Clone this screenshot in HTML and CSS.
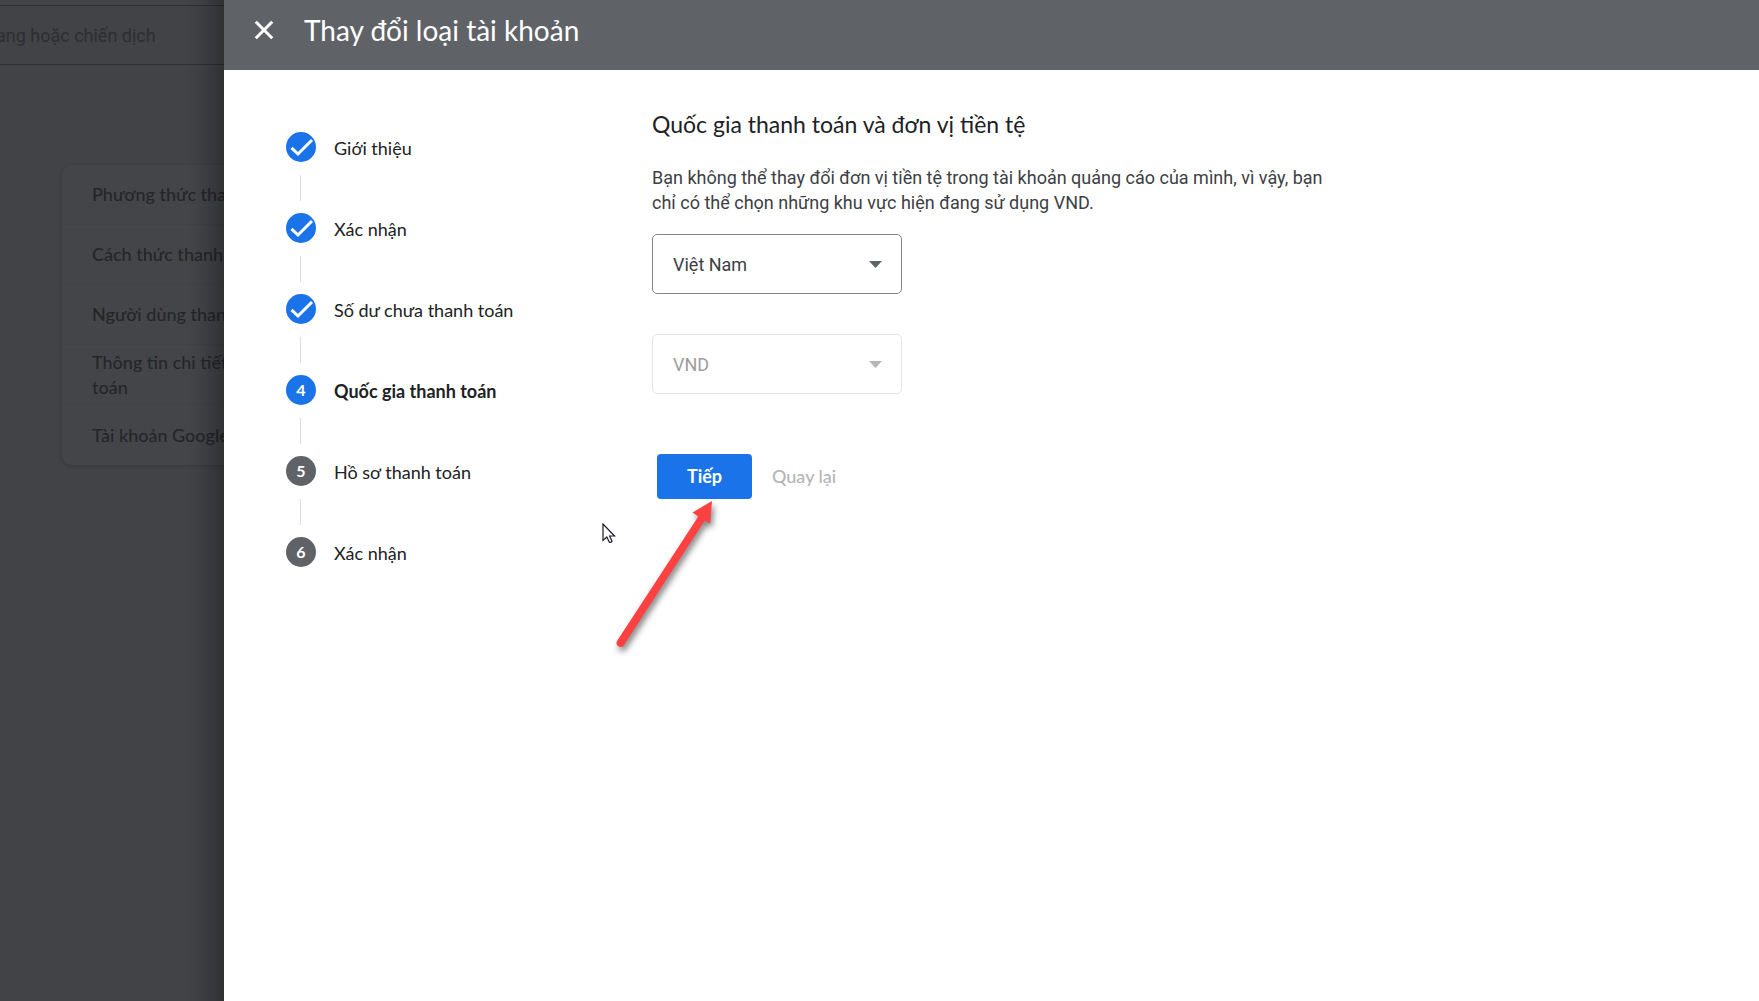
FILE: index.html
```html
<!DOCTYPE html>
<html lang="vi">
<head>
<meta charset="utf-8">
<meta name="viewport" content="width=device-width, initial-scale=1">
<title>Thay đổi loại tài khoản</title>
<link rel="stylesheet" href="styles.css">
</head>
<body>
<div class="layout">
  <aside class="backdrop">
    <div class="search"><span>ang hoặc chiến dịch</span></div>
    <ul class="settings">
      <li>Phương thức thanh</li>
      <li>Cách thức thanh</li>
      <li>Người dùng thanh</li>
      <li>Thông tin chi tiết<br>toán</li>
      <li>Tài khoản Google</li>
    </ul>
  </aside>

  <section class="panel">
    <header class="panel-header">
      <button class="close" type="button" aria-label="Đóng">
        <svg viewBox="0 0 24 24" width="30" height="30"><path d="M5.4 5.4 18.6 18.6M18.6 5.4 5.4 18.600" fill="none" stroke="currentColor" stroke-width="2.4"/></svg>
      </button>
      <h1>Thay đổi loại tài khoản</h1>
    </header>

    <div class="panel-body">
      <ol class="steps">
        <li class="step done">
          <span class="badge"><svg viewBox="0 0 30 30" width="30" height="30"><path d="M5.5 15.8 12 22 26 8" fill="none" stroke="currentColor" stroke-width="3"/></svg></span>
          <span class="label">Giới thiệu</span>
        </li>
        <li class="step done">
          <span class="badge"><svg viewBox="0 0 30 30" width="30" height="30"><path d="M5.5 15.8 12 22 26 8" fill="none" stroke="currentColor" stroke-width="3"/></svg></span>
          <span class="label">Xác nhận</span>
        </li>
        <li class="step done">
          <span class="badge"><svg viewBox="0 0 30 30" width="30" height="30"><path d="M5.5 15.8 12 22 26 8" fill="none" stroke="currentColor" stroke-width="3"/></svg></span>
          <span class="label">Số dư chưa thanh toán</span>
        </li>
        <li class="step current" aria-current="step">
          <span class="badge">4</span>
          <span class="label">Quốc gia thanh toán</span>
        </li>
        <li class="step">
          <span class="badge">5</span>
          <span class="label">Hồ sơ thanh toán</span>
        </li>
        <li class="step">
          <span class="badge">6</span>
          <span class="label">Xác nhận</span>
        </li>
      </ol>

      <form class="content">
        <h2>Quốc gia thanh toán và đơn vị tiền tệ</h2>
        <p>Bạn không thể thay đổi đơn vị tiền tệ trong tài khoản quảng cáo của mình, vì vậy, bạn chỉ có thể chọn những khu vực hiện đang sử dụng VND.</p>
        <div class="field">
          <select aria-label="Quốc gia thanh toán"><option>Việt Nam</option></select>
          <svg class="caret" viewBox="0 0 13 7" width="13" height="7"><path d="M0 0h13L6.500 7z" fill="currentColor"/></svg>
        </div>
        <div class="field disabled">
          <select aria-label="Đơn vị tiền tệ" disabled><option>VND</option></select>
          <svg class="caret" viewBox="0 0 13 7" width="13" height="7"><path d="M0 0h13L6.500 7z" fill="currentColor"/></svg>
        </div>
        <div class="actions">
          <button class="next" type="button">Tiếp</button>
          <button class="back" type="button">Quay lại</button>
        </div>
      </form>
    </div>

    <svg class="arrow" viewBox="0 0 110 160" width="110" height="160" aria-hidden="true">
      <path d="M102 10 82.500 21.500 88.300 25.400 7.200 149.800A4 4 0 0 0 13.800 154.300L94.800 29.400 100 32.700z" fill="#ff4141"/>
    </svg>
    <svg class="cursor" viewBox="0 0 14 21" width="14" height="21" aria-hidden="true">
      <path d="M1 1v16.500l3.800-3.500 2.600 5.200q1.500.8 2.600-.9L7.600 13h5z" fill="#fff" stroke="#1c1c2b" stroke-width="1.200"/>
    </svg>
  </section>
</div>
</body>
</html>
```
FILE: styles.css
```css
* {
  box-sizing: border-box;
}

body {
  margin: 0;
  background: #fff;
  color: #202124;
  font: 18px/25px Lato, "Open Sans", sans-serif;
}

ul, ol, h1, h2, p {
  margin: 0;
  padding: 0;
  list-style: none;
}

button {
  border: 0;
  padding: 0;
  background: none;
  font: inherit;
}

svg {
  display: block;
}

.layout {
  display: grid;
  grid-template-columns: 224px minmax(0, 1fr);
  min-height: 100vh;
}

/* Dimmed page behind the panel */
.backdrop {
  position: relative;
  overflow: hidden;
  padding-top: 5px;
  background: #424346;
  color: #242528;
  white-space: nowrap;
}

.backdrop::after {
  content: "";
  position: absolute;
  inset: 0 0 0 auto;
  width: 36px;
  background: linear-gradient(to right, rgba(0, 0, 0, 0), rgba(0, 0, 0, .08) 40%, rgba(0, 0, 0, .28));
}

.search {
  display: flex;
  align-items: center;
  height: 60px;
  border: solid #303134;
  border-width: 1px 0;
  color: #2d2e31;
  font-family: Roboto, sans-serif;
}

.search span {
  margin-left: -4px;
}

.settings {
  width: 240px;
  margin: 100px 0 0 62px;
  border-radius: 10px;
  background: #444548;
  box-shadow: 0 1px 3px 1px #3b3c3f;
  font-weight: 500;
}

.settings li {
  display: flex;
  align-items: center;
  height: 60px;
  padding-left: 30px;
  border-bottom: 1px solid #414245;
}

.settings li:last-child {
  border-bottom: 0;
}

/* Panel */
.panel {
  position: relative;
  background: #fff;
}

.panel-header {
  display: flex;
  align-items: center;
  gap: 25px;
  height: 70px;
  padding: 0 25px 10px;
  background: #5f6368;
  color: #fff;
}

.close {
  color: inherit;
}

.panel-header h1 {
  font-size: 28px;
  font-weight: 400;
  line-height: 36px;
}

.panel-body {
  display: grid;
  grid-template-columns: 366px minmax(0, 1fr);
  padding: 40px 62px;
}

.steps {
  padding-top: 22px;
}

.step {
  position: relative;
  display: flex;
  gap: 18px;
  height: 81px;
}

.step:not(:last-child)::after {
  content: "";
  position: absolute;
  top: 43px;
  left: 14px;
  width: 1px;
  height: 26px;
  background: #dadce0;
}

.badge {
  flex: none;
  width: 30px;
  height: 30px;
  border-radius: 50%;
  background: #5f6368;
  color: #fff;
  font-size: 16px;
  font-weight: 700;
  line-height: 30px;
  text-align: center;
}

.done .badge,
.current .badge {
  background: #1a73e8;
}

.label {
  line-height: 32px;
}

.current .label {
  font-weight: 700;
}

.content h2 {
  font-size: 23px;
  font-weight: 400;
  line-height: 28px;
}

.content p {
  max-width: 690px;
  margin: 27px 0 19px;
  color: #3c4043;
  font-family: Roboto, sans-serif;
}

.field {
  display: grid;
  align-items: center;
  width: 250px;
  margin-bottom: 40px;
  color: #5f6368;
}

.field select,
.field .caret {
  grid-area: 1 / 1;
}

.field select {
  appearance: none;
  height: 60px;
  padding: 0 20px;
  border: 1px solid #80868b;
  border-radius: 5px;
  background: #fff;
  color: #3c4043;
  font: 18px/25px Roboto, sans-serif;
}

.field .caret {
  justify-self: end;
  margin-right: 20px;
  pointer-events: none;
}

.disabled {
  color: #b4b5b7;
}

.disabled select {
  border-color: #e4e5e7;
  color: #9b9d9f;
  opacity: 1;
}

.actions {
  display: flex;
  gap: 20px;
  margin-top: 60px;
  padding-left: 5px;
}

.next {
  width: 95px;
  height: 45px;
  border-radius: 4px;
  background: #1a73e8;
  color: #fff;
  font-weight: 700;
}

.back {
  color: #b4b5b7;
  font-weight: 500;
}

/* Annotation arrow and pointer drawn over the form */
.arrow {
  position: absolute;
  top: 491px;
  left: 386px;
  overflow: visible;
  filter: drop-shadow(2px 4px 3px rgba(0, 0, 0, .5));
  pointer-events: none;
}

.cursor {
  position: absolute;
  top: 523px;
  left: 378px;
  pointer-events: none;
}
```
